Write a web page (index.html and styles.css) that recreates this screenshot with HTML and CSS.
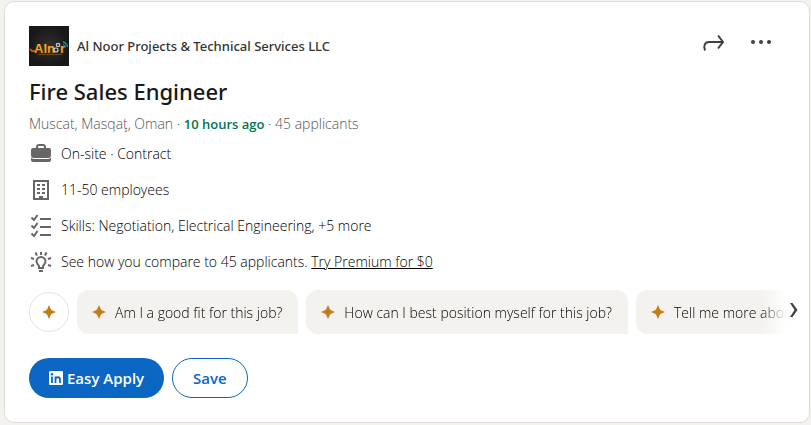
FILE: index.html
```html
<!DOCTYPE html>
<html lang="en">
<head>
    <meta charset="UTF-8">
    <meta name="viewport" content="width=device-width, initial-scale=1.0">
    <title>Fire Sales Engineer</title>
    <link rel="stylesheet" href="styles.css">
</head>
<body>
    <svg class="defs" width="0" height="0" aria-hidden="true">
        <symbol id="spark" viewBox="0 0 16 16">
            <path d="M8 1l1.5 3.6a3.5 3.5 0 0 0 1.9 1.9L15 8l-3.600 1.500a3.500 3.500 0 0 0-1.900 1.900L8 15l-1.500-3.600a3.500 3.500 0 0 0-1.900-1.900L1 8l3.600-1.500a3.500 3.500 0 0 0 1.900-1.900z"/>
        </symbol>
    </svg>

    <main class="job-card">
        <header class="job-header">
            <svg class="company-logo" viewBox="0 0 40 40" role="img" aria-label="Alnoor">
                <defs>
                    <linearGradient id="gold" x1="0" y1="0" x2="0" y2="1">
                        <stop offset="0" stop-color="#ffc629"/>
                        <stop offset="1" stop-color="#f08016"/>
                    </linearGradient>
                    <radialGradient id="dark">
                        <stop offset="0" stop-color="#303030"/>
                        <stop offset="1" stop-color="#181818"/>
                    </radialGradient>
                </defs>
                <rect width="40" height="40" fill="url(#dark)"/>
                <path d="M1 23l2 2 3 0" fill="none" stroke="#e8641b" stroke-width="1.500"/>
                <text class="logo-text" x="5" y="27" fill="url(#gold)">Aln</text>
                <text class="logo-text" x="31" y="27" fill="url(#gold)">r</text>
                <circle cx="27" cy="24" r="2" fill="none" stroke="#c9ccd2" stroke-width="1.200"/>
                <circle cx="29" cy="19" r="1.700" fill="none" stroke="#c9ccd2" stroke-width="1.200"/>
                <path d="M34 18.500a4 4 0 0 1 2.500 3M34 16a6 6 0 0 1 4.500 5" fill="none" stroke="#1e8bab" stroke-width="1.300"/>
                <path d="M9 28.500h24" stroke="#8a5a1c" stroke-width=".7"/>
            </svg>
            <a class="company-name" href="#">Al Noor Projects &amp; Technical Services LLC</a>
            <div class="header-actions">
                <button class="icon-btn" type="button" aria-label="Share">
                    <svg width="24" height="24" viewBox="0 0 24 24" fill="none" stroke="#404040" stroke-width="2">
                        <path d="M4 20.500c-2-4.500 0-8.500 4-8.500h14M17 5.500l5 6.500-5 6.500"/>
                    </svg>
                </button>
                <button class="icon-btn" type="button" aria-label="More options">
                    <svg width="24" height="24" viewBox="0 0 24 24" fill="#404040">
                        <circle cx="4" cy="12" r="2"/>
                        <circle cx="12" cy="12" r="2"/>
                        <circle cx="20" cy="12" r="2"/>
                    </svg>
                </button>
            </div>
        </header>

        <h1 class="job-title">Fire Sales Engineer</h1>
        <p class="job-meta">Muscat, Masqaţ, Oman · <b>10 hours ago</b> · 45 applicants</p>

        <ul class="insights">
            <li>
                <svg width="24" height="24" viewBox="0 0 24 24" fill="#666">
                    <path fill-rule="evenodd" d="M17 6V5a3 3 0 0 0-3-3h-4a3 3 0 0 0-3 3v1H4a2 2 0 0 0-2 2v5a3 3 0 0 0 3 3h14a3 3 0 0 0 3-3V8a2 2 0 0 0-2-2zM9 5a1 1 0 0 1 1-1h4a1 1 0 0 1 1 1v1H9z"/>
                    <path d="M2 15.500a4 4 0 0 0 3 1.500h14a4 4 0 0 0 3-1.500V18a2 2 0 0 1-2 2H4a2 2 0 0 1-2-2z"/>
                </svg>
                <span>On-site · Contract</span>
            </li>
            <li>
                <svg width="24" height="24" viewBox="0 0 24 24" fill="#666">
                    <path fill-rule="evenodd" d="M4 2h16v20H4zM6 4v16h4v-2h4v2h4V4z"/>
                    <path d="M8 6h3v2H8zM13 6h3v2h-3zM8 10h3v2H8zM13 10h3v2h-3zM8 14h3v2H8zM13 14h3v2h-3z"/>
                </svg>
                <span>11-50 employees</span>
            </li>
            <li>
                <svg width="24" height="24" viewBox="0 0 24 24" fill="none" stroke="#666" stroke-width="2">
                    <path d="M11 5h11M11 13h11M11 21h11M2.500 3.500L5 6l3.500-5M2.500 11.500L5 14l3.500-5M2.500 19.500L5 22l3.500-5"/>
                </svg>
                <span>Skills: Negotiation, Electrical Engineering, +5 more</span>
            </li>
            <li>
                <svg width="24" height="24" viewBox="0 0 24 24" fill="none" stroke="#666" stroke-width="2">
                    <path d="M10 18v-1.500c0-1.500-2.500-2.500-2.500-5a4.500 4.500 0 0 1 9 0c0 2.500-2.500 3.500-2.500 5V18zM10 21h4M12 2v3M6.500 2.500L8 5.500M17.500 2.500L16 5.500M2 8l3 1M22 8l-3 1M2 16l3-1M22 16l-3-1"/>
                </svg>
                <span>See how you compare to 45 applicants. <a class="premium-link" href="#">Try Premium for $0</a></span>
            </li>
        </ul>

        <div class="prompts">
            <button class="prompt-icon" type="button" aria-label="Ask AI"><svg class="spark"><use href="#spark"/></svg></button>
            <div class="prompt-list">
                <button class="prompt" type="button"><svg class="spark"><use href="#spark"/></svg>Am I a good fit for this job?</button>
                <button class="prompt" type="button"><svg class="spark"><use href="#spark"/></svg>How can I best position myself for this job?</button>
                <button class="prompt" type="button"><svg class="spark"><use href="#spark"/></svg>Tell me more about</button>
            </div>
            <button class="next-btn" type="button" aria-label="Next">
                <svg width="8" height="16" viewBox="0 0 8 16"><path d="M0 1h2.500L7.500 8l-5 7H0l4.500-7z" fill="#404040"/></svg>
            </button>
        </div>

        <div class="job-actions">
            <button class="btn btn-apply" type="button">
                <svg width="14" height="14" viewBox="0 0 14 14">
                    <rect width="14" height="14" rx="1" fill="#fff"/>
                    <path d="M3 5.500V12M6.500 5.500V12M6.500 12V8.500c0-3 4.500-3 4.500 0V12" fill="none" stroke="#0a66c2" stroke-width="1.800"/>
                    <circle cx="3" cy="3.200" r="1.200" fill="#0a66c2"/>
                </svg>
                Easy Apply
            </button>
            <button class="btn btn-save" type="button">Save</button>
        </div>
    </main>
</body>
</html>
```
FILE: styles.css
```css
* {
    box-sizing: border-box;
}

body {
    margin: 0;
    padding: 1px 1px 2px 4px;
    background-color: #f3f2ef;
    color: #000;
    font-family: "Open Sans", "Noto Sans", sans-serif;
    font-size: 14px;
    font-weight: 300;
    line-height: 20px;
}

button {
    padding: 0;
    border: none;
    background: none;
    font-family: inherit;
    cursor: pointer;
}

svg {
    flex-shrink: 0;
}

.defs {
    position: absolute;
}

.job-card {
    padding: 24px;
    background-color: #fff;
    border: 1px solid #dddcd9;
    border-radius: 10px;
}

.job-header {
    display: flex;
    align-items: center;
    gap: 8px;
}

.company-logo {
    width: 40px;
    height: 40px;
}

.logo-text {
    font-size: 13px;
    font-weight: 700;
    font-family: "Liberation Sans", sans-serif;
}

.company-name {
    color: #333;
    font-family: "Noto Sans", sans-serif;
    font-size: 13px;
    font-weight: 500;
    text-decoration: none;
}

.header-actions {
    display: flex;
    align-self: flex-start;
    gap: 24px;
    margin-left: auto;
    padding: 4px 12px 0 0;
}

.icon-btn {
    width: 24px;
    height: 24px;
}

.job-title {
    margin: 9px 0 7px;
    color: #191919;
    font-family: "Noto Sans", sans-serif;
    font-size: 22px;
    font-weight: 500;
    line-height: 32px;
}

.job-meta {
    margin: 0 0 8px;
    color: #555;
}

.job-meta b {
    color: #01754f;
    font-size: 13px;
    font-weight: 600;
}

.insights {
    display: flex;
    flex-direction: column;
    gap: 12px;
    margin: 0 0 16px;
    padding: 0;
    list-style: none;
}

.insights li {
    display: flex;
    align-items: center;
    gap: 8px;
    height: 24px;
}

.premium-link {
    color: inherit;
}

.prompts {
    position: relative;
    display: flex;
    align-items: center;
    gap: 8px;
    margin-right: -16px;
}

.spark {
    width: 16px;
    height: 16px;
    fill: #c37d16;
}

.prompt-icon {
    display: flex;
    flex-shrink: 0;
    align-items: center;
    justify-content: center;
    width: 40px;
    height: 40px;
    border: 1px solid #e4e3e0;
    border-radius: 50%;
}

.prompt-list {
    display: flex;
    flex: 1;
    gap: 8px;
    min-width: 0;
    overflow: hidden;
    mask-image: linear-gradient(to left, transparent 14px, #000 40px);
}

.prompt {
    display: flex;
    flex-shrink: 0;
    align-items: center;
    gap: 8px;
    height: 44px;
    padding: 0 16px 0 14px;
    background-color: #f3f2ee;
    border-radius: 12px 12px 0 12px;
    color: #000;
    font-size: 14px;
    font-weight: 300;
    white-space: nowrap;
}

.next-btn {
    position: absolute;
    right: 3px;
    top: 12px;
    display: flex;
}

.job-actions {
    display: flex;
    gap: 8px;
    margin-top: 24px;
}

.btn {
    display: flex;
    align-items: center;
    gap: 4px;
    height: 40px;
    padding: 0 20px;
    border-radius: 20px;
    font-size: 15px;
    font-weight: 600;
}

.btn-apply {
    background-color: #0a66c2;
    color: #fff;
}

.btn-save {
    border: 1px solid #0a66c2;
    color: #0a66c2;
}
```
